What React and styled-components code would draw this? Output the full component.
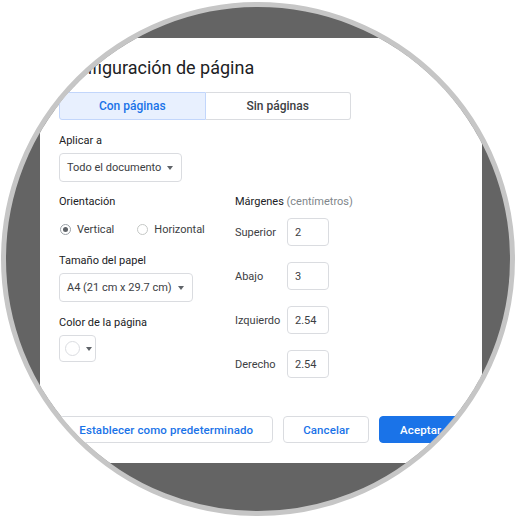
import React from "react";
import styled, { createGlobalStyle } from "styled-components";

const Global = createGlobalStyle`
  html, body { margin: 0; padding: 0; background: #ffffff; }
  body { font-family: Roboto, "Noto Sans", Arial, sans-serif; }
  * { box-sizing: border-box; }
`;

const Lens = styled.div`
  margin: 2px 0 0 1px;
  width: 514px;
  height: 514px;
  border: 5px solid #c6c6c6;
  border-radius: 50%;
  overflow: hidden;
  background: #646464;
  padding: 31px 0 0 34px;
`;

const Dialog = styled.div`
  width: 442px;
  height: 425px;
  background: #ffffff;
  padding: 18px 20px 20px 19px;
  display: flex;
  flex-direction: column;
  color: #202124;
`;

const Title = styled.h1`
  margin: 0 0 0 1px;
  font-size: 18px;
  line-height: 24px;
  font-weight: 400;
  color: #202124;
`;

const Tabs = styled.div`
  margin-top: 12px;
  display: flex;
  width: 292px;
`;

const Tab = styled.div`
  flex: 1;
  height: 28px;
  display: flex;
  align-items: center;
  justify-content: center;
  font-size: 12px;
  font-weight: 500;
  border: 1px solid ${(p) => (p.$active ? "#c2d6fb" : "#dadce0")};
  background: ${(p) => (p.$active ? "#e8f0fe" : "#ffffff")};
  color: ${(p) => (p.$active ? "#1a73e8" : "#3c4043")};
  border-radius: ${(p) => (p.$active ? "3px 0 0 3px" : "0 3px 3px 0")};
  ${(p) => (p.$active ? "" : "border-left: none;")}
`;

const Label = styled.div`
  margin-top: ${(p) => p.$mt || 0}px;
  font-size: 11px;
  line-height: 16px;
  font-weight: 400;
  color: #202124;
`;

const Muted = styled.span`
  color: #80868b;
`;

const Select = styled.div`
  margin-top: 4px;
  align-self: flex-start;
  height: 29px;
  display: inline-flex;
  align-items: center;
  gap: 6px;
  padding: 0 8px 0 7px;
  border: 1px solid #dadce0;
  border-radius: 4px;
  font-size: 11px;
  color: #3c4043;
`;

const Caret = styled.span`
  width: 0;
  height: 0;
  border-left: 3.5px solid transparent;
  border-right: 3.5px solid transparent;
  border-top: 4px solid #5f6368;
`;

const Columns = styled.div`
  margin-top: 12px;
  display: grid;
  grid-template-columns: 176px 1fr;
`;

const Column = styled.div`
  display: flex;
  flex-direction: column;
`;

const RadioRow = styled.div`
  margin-top: 10px;
  height: 18px;
  display: flex;
  align-items: center;
  gap: 22px;
`;

const RadioItem = styled.label`
  display: flex;
  align-items: center;
  gap: 6px;
  font-size: 11px;
  color: #3c4043;
`;

const RadioDot = styled.span`
  width: 11px;
  height: 11px;
  border-radius: 50%;
  border: 1px solid ${(p) => (p.$on ? "#9aa0a6" : "#c4c7c5")};
  display: flex;
  align-items: center;
  justify-content: center;
  margin-left: 1px;
  &::after {
    content: "";
    width: 5px;
    height: 5px;
    border-radius: 50%;
    background: ${(p) => (p.$on ? "#5f6368" : "transparent")};
  }
`;

const Swatch = styled.div`
  margin-top: 4px;
  align-self: flex-start;
  width: 37px;
  height: 27px;
  border: 1px solid #dadce0;
  border-radius: 4px;
  display: flex;
  align-items: center;
  gap: 6px;
  padding-left: 5px;
`;

const SwatchCircle = styled.span`
  width: 15px;
  height: 15px;
  border-radius: 50%;
  border: 1px solid #dadce0;
  background: #ffffff;
`;

const MarginRows = styled.div`
  margin-top: 8px;
  display: flex;
  flex-direction: column;
  gap: 16px;
`;

const MarginRow = styled.div`
  display: flex;
  align-items: center;
  height: 28px;
`;

const MarginLabel = styled.span`
  width: 52px;
  font-size: 11px;
  color: #3c4043;
`;

const NumberBox = styled.div`
  width: 42px;
  height: 28px;
  border: 1px solid #dadce0;
  border-radius: 4px;
  display: flex;
  align-items: center;
  padding-left: 7px;
  font-size: 11px;
  color: #3c4043;
`;

const Footer = styled.div`
  margin-top: auto;
  display: flex;
  gap: 10px;
`;

const Button = styled.button`
  width: ${(p) => p.$w}px;
  height: 27px;
  border-radius: 4px;
  font-family: inherit;
  font-size: 11.5px;
  font-weight: 500;
  letter-spacing: 0.1px;
  border: 1px solid ${(p) => (p.$primary ? "#1a73e8" : "#dadce0")};
  background: ${(p) => (p.$primary ? "#1a73e8" : "#ffffff")};
  color: ${(p) => (p.$primary ? "#ffffff" : "#1a73e8")};
  padding: 0;
`;

const margins = [
  ["Superior", "2"],
  ["Abajo", "3"],
  ["Izquierdo", "2.54"],
  ["Derecho", "2.54"],
];

export default function App() {
  return (
    <>
      <Global />
      <Lens>
        <Dialog>
          <Title>Configuración de página</Title>
          <Tabs>
            <Tab $active>Con páginas</Tab>
            <Tab>Sin páginas</Tab>
          </Tabs>
          <Label $mt={13}>Aplicar a</Label>
          <Select>
            Todo el documento <Caret />
          </Select>
          <Columns>
            <Column>
              <Label>Orientación</Label>
              <RadioRow>
                <RadioItem>
                  <RadioDot $on />
                  Vertical
                </RadioItem>
                <RadioItem>
                  <RadioDot />
                  Horizontal
                </RadioItem>
              </RadioRow>
              <Label $mt={15}>Tamaño del papel</Label>
              <Select>
                A4 (21 cm x 29.7 cm) <Caret />
              </Select>
              <Label $mt={13}>Color de la página</Label>
              <Swatch>
                <SwatchCircle />
                <Caret />
              </Swatch>
            </Column>
            <Column>
              <Label>
                Márgenes <Muted>(centímetros)</Muted>
              </Label>
              <MarginRows>
                {margins.map(([name, value]) => (
                  <MarginRow key={name}>
                    <MarginLabel>{name}</MarginLabel>
                    <NumberBox>{value}</NumberBox>
                  </MarginRow>
                ))}
              </MarginRows>
            </Column>
          </Columns>
          <Footer>
            <Button $w={215}>Establecer como predeterminado</Button>
            <Button $w={86}>Cancelar</Button>
            <Button $w={83} $primary>
              Aceptar
            </Button>
          </Footer>
        </Dialog>
      </Lens>
    </>
  );
}
